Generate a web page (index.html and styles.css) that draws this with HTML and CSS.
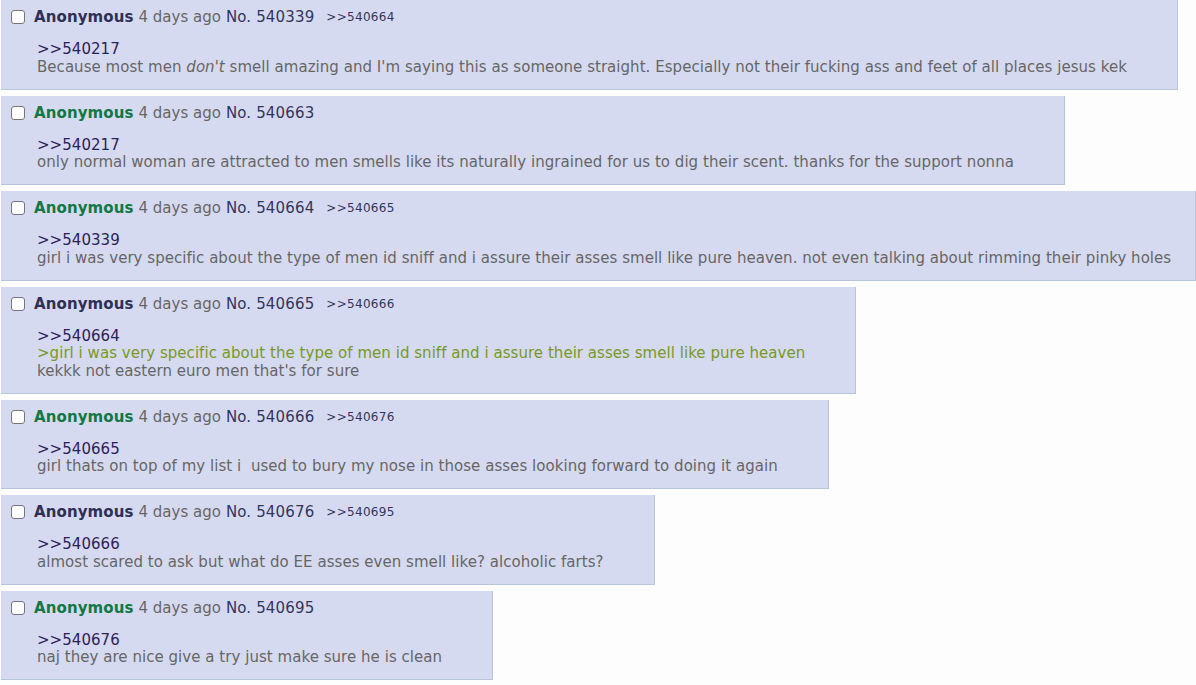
FILE: index.html
```html
<!DOCTYPE html>
<html lang="en">
<head>
<meta charset="UTF-8">
<title>Thread</title>
<link rel="stylesheet" href="styles.css">
</head>
<body>
  <div class="thread">

    <div class="post">
      <div class="post-info">
        <span class="check"></span>
        <span class="name">Anonymous</span>
        <span class="time">4 days ago</span>
        <a class="post-no" href="#">No. 540339</a>
        <a class="backlink" href="#">&gt;&gt;540664</a>
      </div>
      <blockquote class="post-body">
        <a class="quotelink" href="#">&gt;&gt;540217</a><br>
        Because most men <em>don't</em> smell amazing and I'm saying this as someone straight. Especially not their fucking ass and feet of all places jesus kek
      </blockquote>
    </div>

    <div class="post">
      <div class="post-info">
        <span class="check"></span>
        <span class="name green">Anonymous</span>
        <span class="time">4 days ago</span>
        <a class="post-no" href="#">No. 540663</a>
      </div>
      <blockquote class="post-body">
        <a class="quotelink" href="#">&gt;&gt;540217</a><br>
        only normal woman are attracted to men smells like its naturally ingrained for us to dig their scent. thanks for the support nonna
      </blockquote>
    </div>

    <div class="post">
      <div class="post-info">
        <span class="check"></span>
        <span class="name green">Anonymous</span>
        <span class="time">4 days ago</span>
        <a class="post-no" href="#">No. 540664</a>
        <a class="backlink" href="#">&gt;&gt;540665</a>
      </div>
      <blockquote class="post-body">
        <a class="quotelink" href="#">&gt;&gt;540339</a><br>
        girl i was very specific about the type of men id sniff and i assure their asses smell like pure heaven. not even talking about rimming their pinky holes
      </blockquote>
    </div>

    <div class="post">
      <div class="post-info">
        <span class="check"></span>
        <span class="name">Anonymous</span>
        <span class="time">4 days ago</span>
        <a class="post-no" href="#">No. 540665</a>
        <a class="backlink" href="#">&gt;&gt;540666</a>
      </div>
      <blockquote class="post-body">
        <a class="quotelink" href="#">&gt;&gt;540664</a><br>
        <span class="greentext">&gt;girl i was very specific about the type of men id sniff and i assure their asses smell like pure heaven</span><br>
        kekkk not eastern euro men that's for sure
      </blockquote>
    </div>

    <div class="post">
      <div class="post-info">
        <span class="check"></span>
        <span class="name green">Anonymous</span>
        <span class="time">4 days ago</span>
        <a class="post-no" href="#">No. 540666</a>
        <a class="backlink" href="#">&gt;&gt;540676</a>
      </div>
      <blockquote class="post-body">
        <a class="quotelink" href="#">&gt;&gt;540665</a><br>
        girl thats on top of my list i &nbsp;used to bury my nose in those asses looking forward to doing it again
      </blockquote>
    </div>

    <div class="post">
      <div class="post-info">
        <span class="check"></span>
        <span class="name">Anonymous</span>
        <span class="time">4 days ago</span>
        <a class="post-no" href="#">No. 540676</a>
        <a class="backlink" href="#">&gt;&gt;540695</a>
      </div>
      <blockquote class="post-body">
        <a class="quotelink" href="#">&gt;&gt;540666</a><br>
        almost scared to ask but what do EE asses even smell like? alcoholic farts?
      </blockquote>
    </div>

    <div class="post">
      <div class="post-info">
        <span class="check"></span>
        <span class="name green">Anonymous</span>
        <span class="time">4 days ago</span>
        <a class="post-no" href="#">No. 540695</a>
      </div>
      <blockquote class="post-body">
        <a class="quotelink" href="#">&gt;&gt;540676</a><br>
        naj they are nice give a try just make sure he is clean
      </blockquote>
    </div>

  </div>
</body>
</html>
```

FILE: styles.css
```css
body {
  margin: 0;
  background: #fdfdfd;
  font-family: "DejaVu Sans", Verdana, sans-serif;
  font-size: 15px;
  color: #666;
}

.thread {
  display: flex;
  flex-direction: column;
  align-items: flex-start;
  gap: 6px;
  padding-left: 1px;
}

/* reply box */
.post {
  max-width: 100%;
  box-sizing: border-box;
  overflow: hidden;
  background: #d6daf0;
  border-right: 1px solid #b7c5d9;
  border-bottom: 1px solid #b7c5d9;
}

.post-info {
  display: flex;
  align-items: center;
  padding: 7px 0 0 10px;
  height: 20px;
  line-height: 20px;
  white-space: nowrap;
}

.check {
  width: 12px;
  height: 12px;
  border: 1px solid #767676;
  border-radius: 3px;
  background: #fff;
  margin-right: 9px;
}

.name {
  font-weight: bold;
  color: #2f2f55;
  margin-right: 5px;
  letter-spacing: 0.1px;
}
.name.green {
  color: #117743;
}

.time {
  margin-right: 5px;
}

a {
  text-decoration: none;
  color: #34345c;
}

.post-no {
  letter-spacing: 0.15px;
}

.backlink {
  font-size: 12px;
  margin-left: 12px;
  letter-spacing: 0.3px;
}

.post-body {
  margin: 14px 50px 12.5px 36px;
  line-height: 17.5px;
  letter-spacing: 0.04px;
  white-space: nowrap;
}

.quotelink {
  color: #2e2058;
}

.greentext {
  color: #789922;
}
```
